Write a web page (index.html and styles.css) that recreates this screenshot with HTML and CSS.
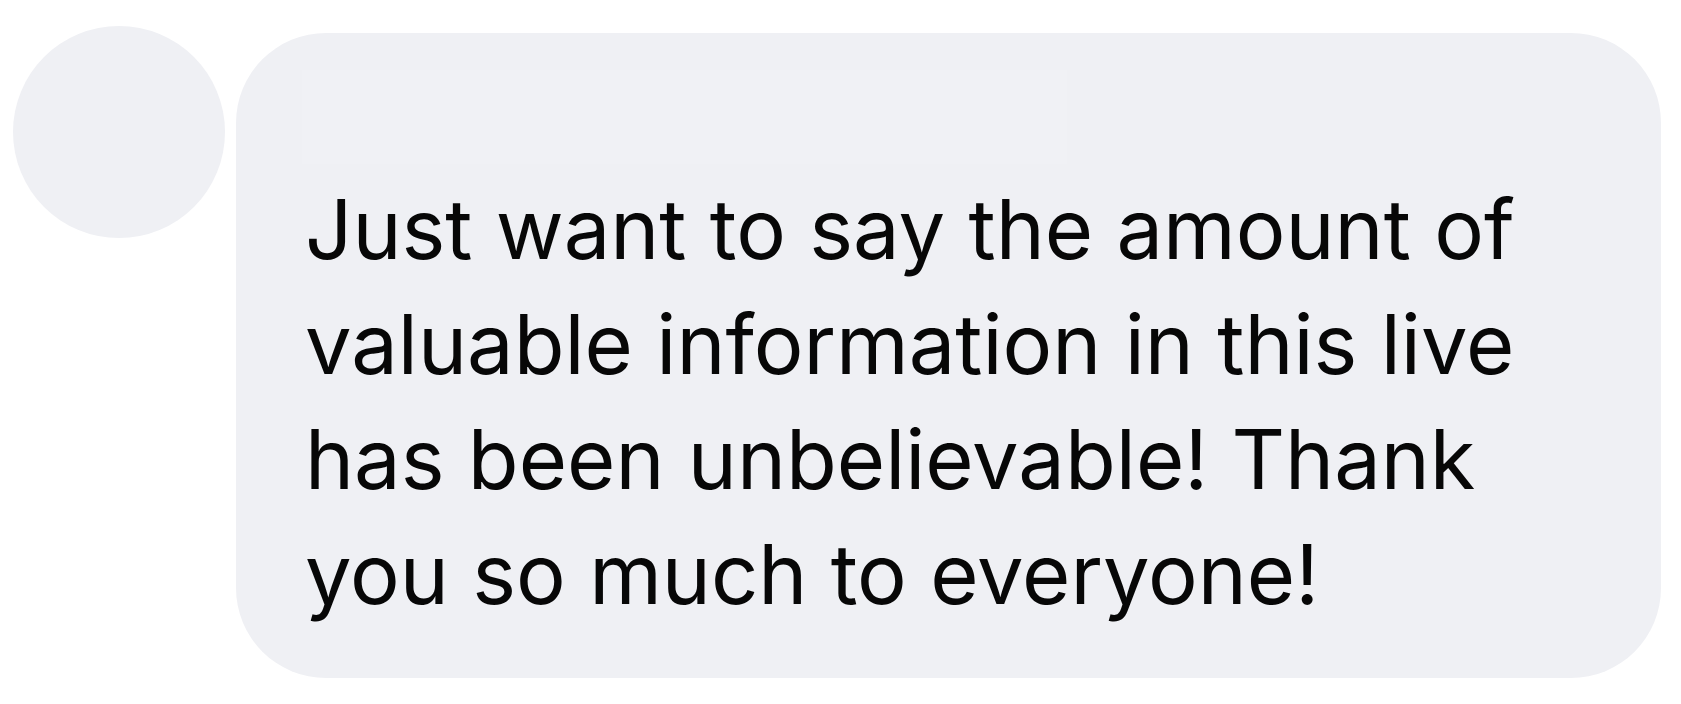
FILE: index.html
```html
<!DOCTYPE html>
<html lang="en">
<head>
<meta charset="utf-8">
<link rel="stylesheet" href="styles.css">
</head>
<body>
<div class="comment">
  <div class="avatar"></div>
  <div class="bubble">
    <div class="name-placeholder"></div>
    <p class="text">Just want to say the amount of valuable information in this live has been unbelievable! Thank you so much to everyone!</p>
  </div>
</div>
</body>
</html>
```
FILE: styles.css
```css
html, body {
  margin: 0;
  padding: 0;
  background: #ffffff;
}
.comment {
  display: flex;
  align-items: flex-start;
  padding: 26px 0 0 13px;
}
.avatar {
  width: 212px;
  height: 212px;
  border-radius: 50%;
  background: #eff0f4;
  flex: none;
}
.bubble {
  margin-left: 11px;
  margin-top: 7px;
  width: 1425px;
  height: 645px;
  box-sizing: border-box;
  border-radius: 90px;
  background: #eff0f4;
  padding: 37px 60px 0 66px;
}
.name-placeholder {
  width: 765px;
  height: 94px;
  background: #f0f1f5;
}
.text {
  margin: 8px 0 0 3px;
  font-family: Inter, "Noto Sans", sans-serif;
  font-size: 83px;
  line-height: 115px;
  color: #070707;
  width: 1240px;
}
```
